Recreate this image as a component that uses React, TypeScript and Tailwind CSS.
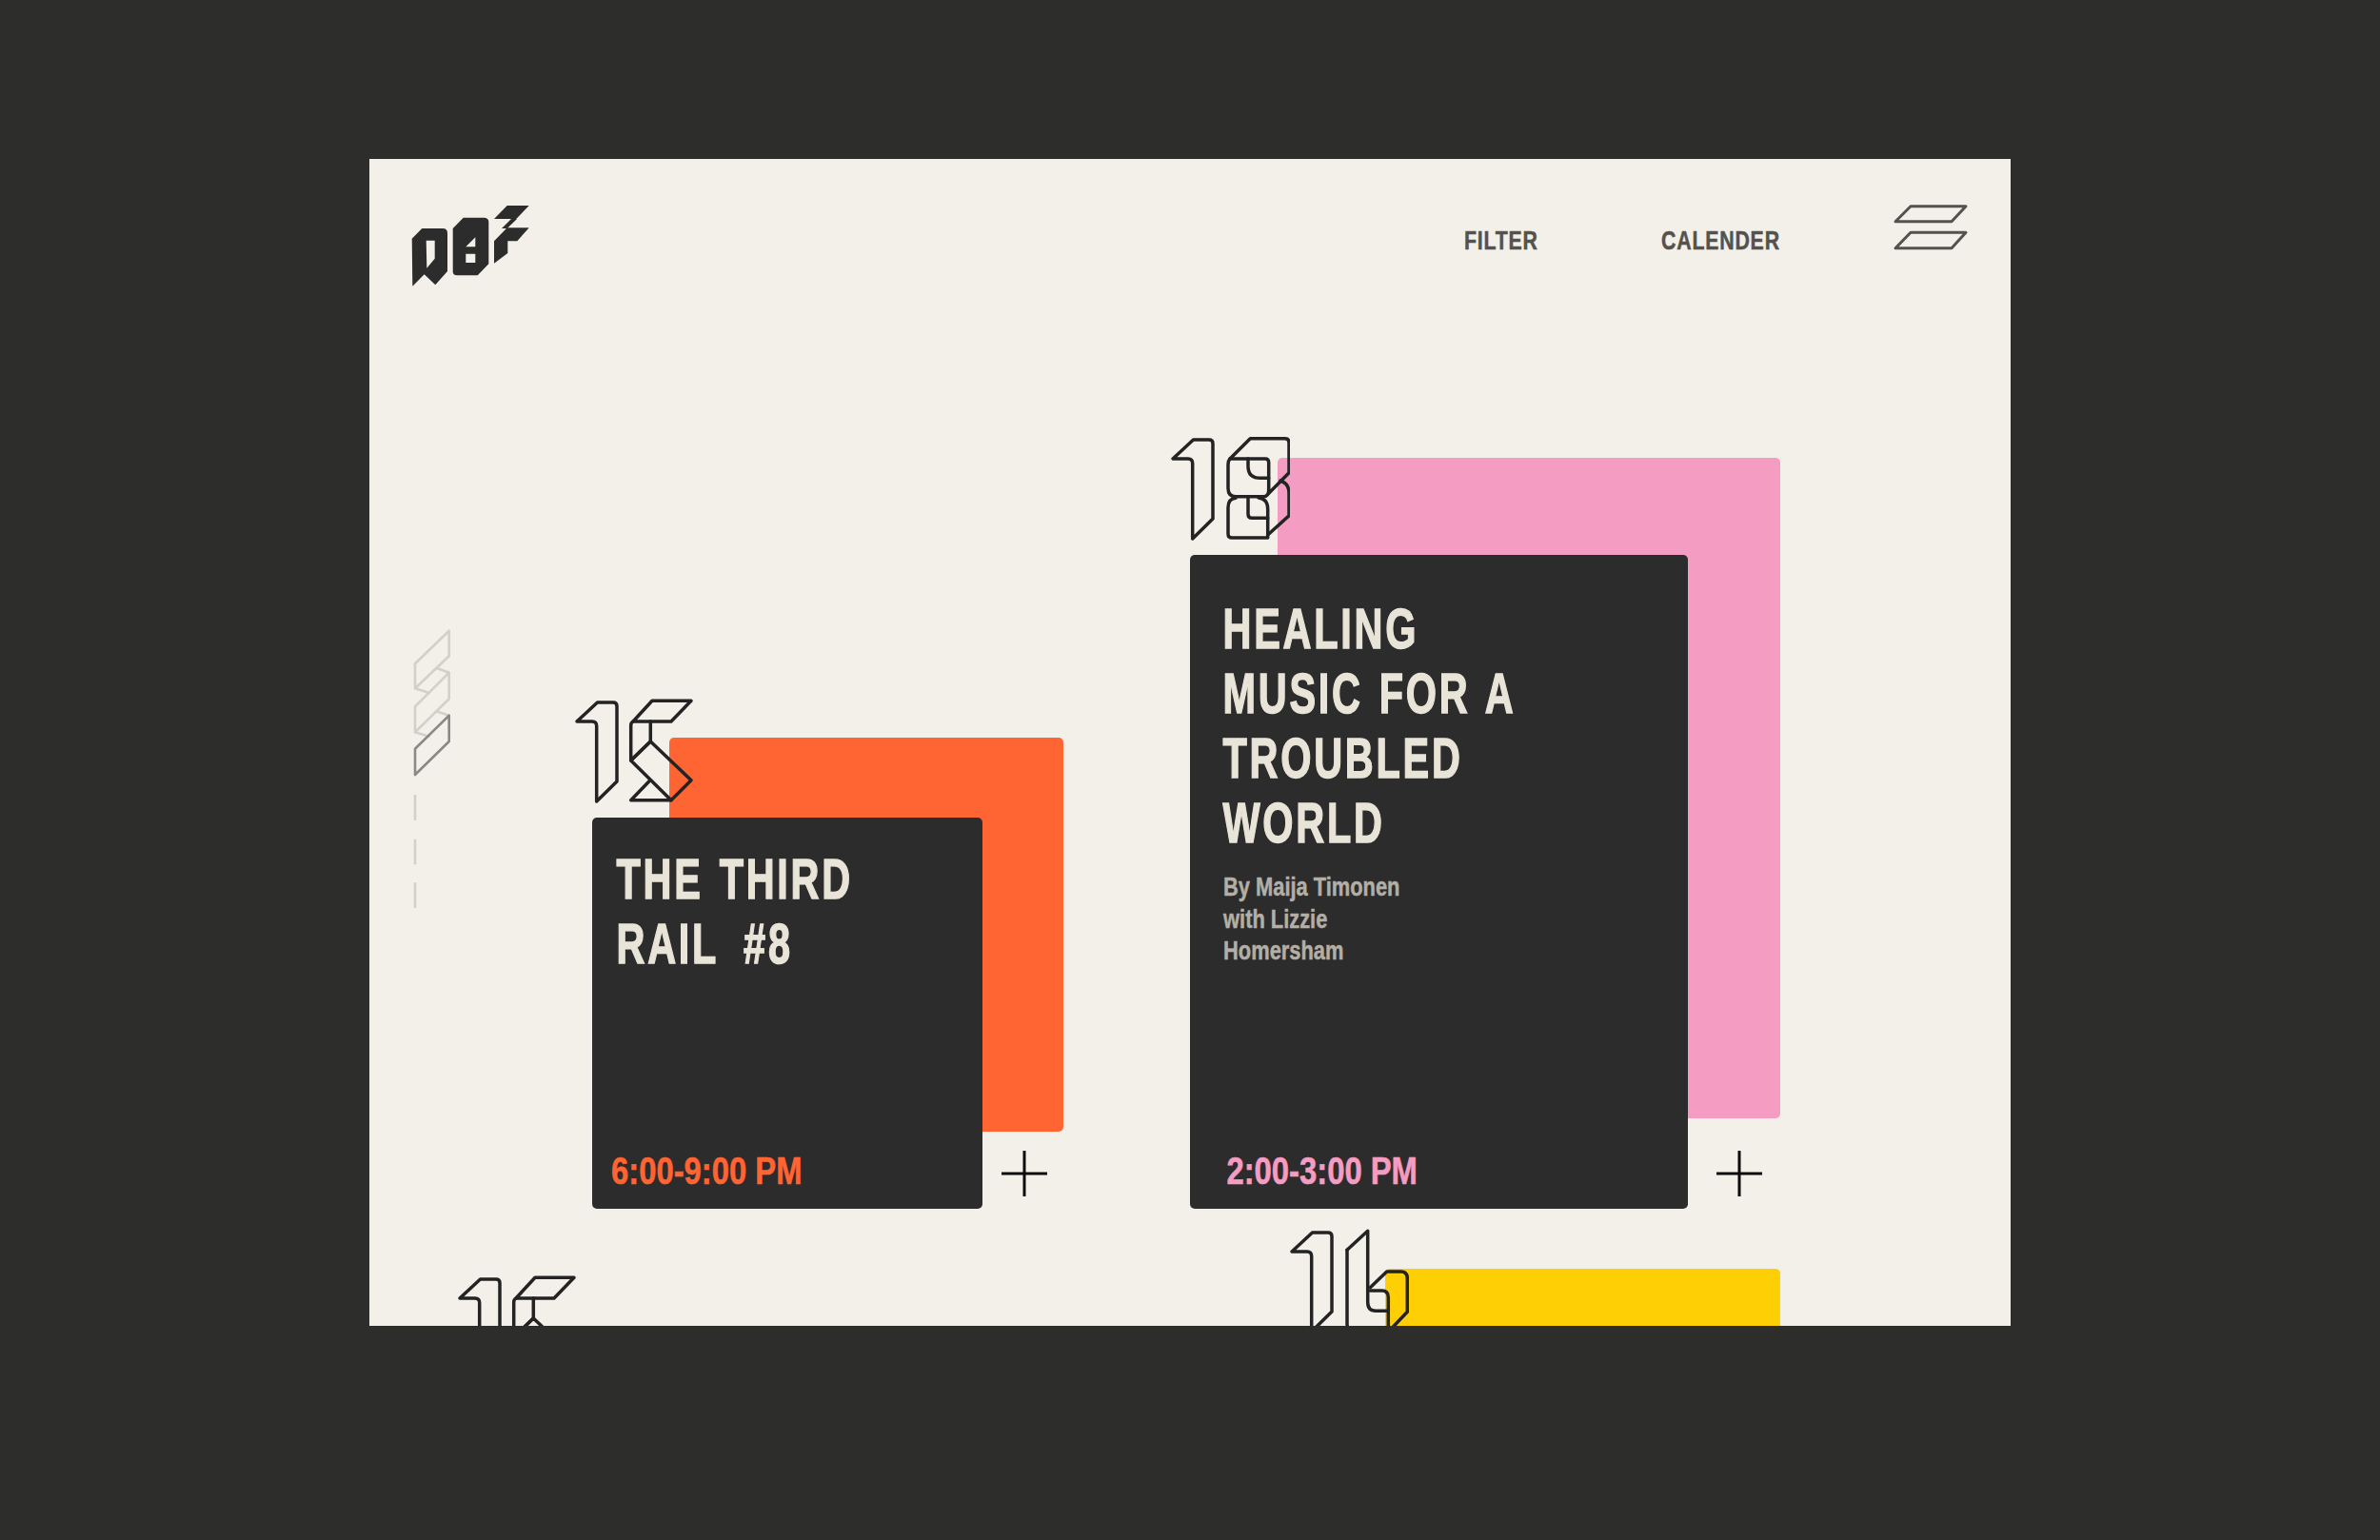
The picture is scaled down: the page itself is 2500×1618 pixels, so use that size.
import React from 'react';

const heavy = "font-['Liberation_Sans',sans-serif] font-bold";

const One = () => (
    <path d="M2 24 L23.5 4 H40 Q44 4 44 8 V87 L22.7 108 V29 Q22.7 24 18 24 Z" />
);

const Fifteen = () => (
    <svg width="125" height="110" viewBox="0 0 125 110" fill="none" stroke="#232323" strokeWidth="3.5" strokeLinejoin="round" strokeLinecap="round" className="relative z-10 block">
        <One />
        <path d="M61 24 L81 2.3 H122 L101 24 Z" />
        <path d="M61 24 Q58.7 25 58.7 28.3 V65 L79.3 45 V24" />
        <path d="M58.7 65 L79.3 45 L122 85.7 L101 106.7 Z" />
        <path d="M58.7 106.7 H101 M58.7 106.7 L78.7 86" />
    </svg>
);

const Eighteen = () => (
    <svg width="125" height="110" viewBox="0 0 125 110" fill="none" stroke="#232323" strokeWidth="3.5" strokeLinejoin="round" strokeLinecap="round" className="relative z-10 block">
        <One />
        <path d="M62 24 L83.3 2.7 H120 Q124 2.7 124 7 V38.7 L102.7 60.3" />
        <path d="M62 24 H99 Q102.7 24 102.7 28 V57 Q102.7 63.7 97 63.7 H68 Q60 63.7 60 55 V30 Q60 26 62 24" />
        <path d="M81 24 V32 Q81 44.3 94 44.3 H102.7" />
        <path d="M115 47 Q124 50 124 60 V83.7 L101.7 104" />
        <path d="M68 65.3 Q60 66 60 75.3 V103 Q60 107 64 107 H101.7 V77 Q101.7 66 92 65" />
        <path d="M81 65.3 V82 Q81 86.3 85 86.3 H101.7" />
    </svg>
);

const Sixteen = () => (
    <svg width="125" height="110" viewBox="0 0 125 110" fill="none" stroke="#232323" strokeWidth="3.5" strokeLinejoin="round" strokeLinecap="round" className="relative z-10 block">
        <One />
        <path d="M60 22.3 L81.7 2.3 V77 Q81.7 86.3 90 86.3 H103.3" />
        <path d="M60 22.3 V100 Q60 104 63 106" />
        <path d="M84.3 61.7 L101.7 45 H116.7 Q123.3 45 123.3 52.3 V87.3 L103.3 108.3" />
        <path d="M84.3 65 H96.7 Q103.3 65 103.3 72.3 V108.3" />
    </svg>
);

const Plus = () => (
    <svg width="48" height="48" viewBox="0 0 48 48" stroke="#0c0c0c" strokeWidth="3" className="block">
        <path d="M0 24 H48 M24 0 V48" />
    </svg>
);

const Logo = () => (
    <svg width="126" height="86" viewBox="0 0 126 86" fill="#2c2c2c" fillRule="evenodd" className="block">
        <path d="M1.7 34.7 L12.3 24 H34 Q39 24 39 29 V69 L26.3 83.3 L14.7 72.3 L2.3 84.7 Z M16.7 36.7 H25.7 V55.7 L17.3 65.7 Z" />
        <path d="M44.7 24 L55.7 12.7 H77.3 Q82.3 12.7 82.3 17.3 V61.3 L70.7 73.3 H49 Q44.7 73.3 44.7 69 Z M58.3 43.3 L68.3 33.3 V43.3 Z M58.3 50.7 H68.3 V60 H58.3 Z" />
        <path d="M88 14 L101.7 0 H124.7 L111.3 14 Z" />
        <path d="M106 14 H112 L101.7 24 H96 Z" />
        <path d="M88 37.3 L101.7 23.3 H124.7 L112.3 37.3 H102.3 V50 L88 60.7 Z" />
    </svg>
);

const MenuIcon = () => (
    <svg width="78" height="50" viewBox="0 0 78 50" fill="none" stroke="#55524e" strokeWidth="3" strokeLinejoin="round" className="block">
        <path d="M2 18.7 L18 2.7 H76 L61 18.7 Z" />
        <path d="M2 46.7 L18 30.3 H76 L61 46.7 Z" />
    </svg>
);

const Rail = () => (
    <svg width="42" height="300" viewBox="0 0 42 300" fill="none" strokeWidth="2.6" strokeLinejoin="round" className="block">
        <g stroke="#d3d0c9">
            <path d="M3 39.3 L38.7 4.7 V31.3 L3 65.3 Z" />
            <path d="M3 84.3 L38.7 48.7 V76.3 L3 111.3 Z" />
            <path d="M25.3 43.7 L38.7 48.7 M3 65.3 L18.7 70.3 M25.3 89.3 L38.7 93.7 M3 111.3 L18.7 116" />
            <path d="M3 177 V203.7 M3 223.7 V250.3 M3 269.3 V296" />
        </g>
        <path d="M3 128.7 L38.7 93.7 V121 L3 156 Z" stroke="#8b8986" />
    </svg>
);

const Title = ({ children, className }: { children: React.ReactNode; className: string }) => (
    <h2 className={`${heavy} text-[60px] leading-[68px] tracking-[4px] [word-spacing:4px] [-webkit-text-stroke:1.5px] text-[#e9e4d8] origin-left scale-x-[.69] whitespace-nowrap ${className}`}>
        {children}
    </h2>
);

const App: React.FC = () => {
    return (
        <div className="h-[1618px] w-[2500px] bg-[#2d2d2c] pt-[167px] pl-[388px]">
            <div className="h-[1226px] w-[1724px] bg-[#f3f0e9] overflow-hidden">
                <header className="h-[291px] flex items-start pl-[43px]">
                    <div className="mt-[49px]">
                        <Logo />
                    </div>
                    <nav className={`${heavy} ml-[981px] mt-[66px] flex text-[27px] leading-[40px] tracking-[1px] [-webkit-text-stroke:0.5px] text-[#55524e]`}>
                        <a className="w-[207px] origin-left scale-x-[.79]">FILTER</a>
                        <a className="w-[244px] origin-left scale-x-[.79]">CALENDER</a>
                    </nav>
                    <div className="mt-[47px]">
                        <MenuIcon />
                    </div>
                </header>

                <div className="flex items-end pl-[45px]">
                    <div className="self-start mt-[200px] w-[42px]">
                        <Rail />
                    </div>

                    <section className="relative ml-[129px] w-[513px]">
                        <div className="absolute left-[99px] top-[41px] h-[414px] w-[414px] rounded-[5px] bg-[#ff6433]" />
                        <Fifteen />
                        <div className="relative mt-[15px] ml-[18px] flex items-end">
                            <article className="h-[411px] w-[410px] rounded-[5px] bg-[#2c2c2c] flex flex-col justify-between pt-[31px] pb-[18px]">
                                <Title className="pl-[37px]">
                                    THE THIRD
                                    <br />
                                    RAIL <span className="ml-[14px]">#8</span>
                                </Title>
                                <p className={`${heavy} pl-[25px] text-[41px] leading-[44px] [-webkit-text-stroke:0.6px] text-[#ff6433] origin-left scale-x-[.8] whitespace-nowrap`}>
                                    6:00-9:00 PM
                                </p>
                            </article>
                            <div className="ml-[20px] mb-[13px]">
                                <Plus />
                            </div>
                        </div>
                    </section>

                    <section className="relative ml-[113px] w-[639px]">
                        <div className="absolute left-[112px] top-[23px] h-[694px] w-[528px] rounded-[5px] bg-[#f59cc2]" />
                        <Eighteen />
                        <div className="relative mt-[15px] ml-[20px] flex items-end">
                            <article className="h-[687px] w-[523px] rounded-[5px] bg-[#2c2c2c] flex flex-col justify-between pt-[44px] pb-[18px]">
                                <div>
                                    <Title className="pl-[50px]">
                                        HEALING
                                        <br />
                                        MUSIC FOR A
                                        <br />
                                        TROUBLED
                                        <br />
                                        WORLD
                                    </Title>
                                    <p className={`${heavy} mt-[16px] pl-[45px] text-[28px] leading-[33.5px] [-webkit-text-stroke:0.5px] text-[#b3afa6] origin-left scale-x-[.78] whitespace-nowrap`}>
                                        By Maija Timonen
                                        <br />
                                        with Lizzie
                                        <br />
                                        Homersham
                                    </p>
                                </div>
                                <p className={`${heavy} pl-[48px] text-[41px] leading-[44px] [-webkit-text-stroke:0.6px] text-[#f59cc2] origin-left scale-x-[.8] whitespace-nowrap`}>
                                    2:00-3:00 PM
                                </p>
                            </article>
                            <div className="ml-[30px] mb-[13px]">
                                <Plus />
                            </div>
                        </div>
                    </section>
                </div>

                <div className="mt-[21px] flex items-start pl-[93px]">
                    <section className="mt-[49px] w-[125px]">
                        <Fifteen />
                    </section>
                    <section className="relative ml-[749px] w-[514px]">
                        <div className="absolute left-[100px] top-[42px] h-[414px] w-[415px] rounded-[5px] bg-[#ffcf05]" />
                        <Sixteen />
                    </section>
                </div>
            </div>
        </div>
    );
};

export default App;
